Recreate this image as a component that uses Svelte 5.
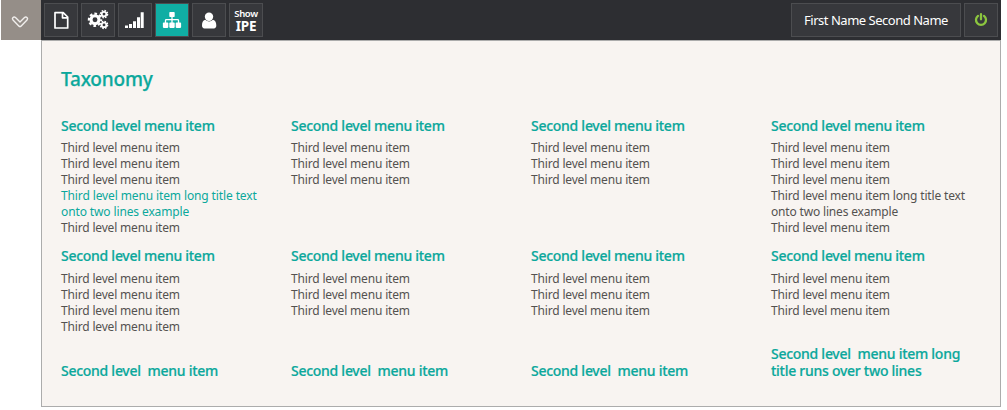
<script>
  const third = 'Third level menu item';
  const long = 'Third level menu item long title text onto two lines example';
  const second = 'Second level menu item';
  const spaced = 'Second level\u00a0 menu item';
  const rows = [
    [
      { title: second, items: [third, third, third, long, third], active: 3 },
      { title: second, items: [third, third, third] },
      { title: second, items: [third, third, third] },
      { title: second, items: [third, third, third, long, third] }
    ],
    [
      { title: second, items: [third, third, third, third] },
      { title: second, items: [third, third, third] },
      { title: second, items: [third, third, third] },
      { title: second, items: [third, third, third] }
    ],
    [
      { title: spaced, items: [] },
      { title: spaced, items: [] },
      { title: spaced, items: [] },
      { title: spaced + ' long title runs over two lines', items: [] }
    ]
  ];
</script>

<div class="page">
  <header class="bar">
    <button class="toggle" aria-label="Toggle menu">
      <svg width="40" height="40" viewBox="0 0 40 40" fill="none" stroke="#f1efed" stroke-width="1.4" stroke-linejoin="round">
        <path d="M12 17.5 Q10.8 18.9 12 20.1 L17.8 26 Q19 27.2 20.2 26 L26 20.1 Q27.2 18.9 26 17.5 Q24.8 16.4 23.5 17.5 L19 22 L14.5 17.5 Q13.2 16.4 12 17.5Z" />
      </svg>
    </button>
    <nav class="tools">
      <button class="tool" aria-label="Content">
        <svg width="32" height="32" viewBox="0 0 32 32" fill="none" stroke="#fff" stroke-width="1.7" stroke-linejoin="round">
          <path d="M10 8.7H18.2L22.7 13V24H10ZM17.5 9V13.8H22.5" />
        </svg>
      </button>
      <button class="tool" aria-label="Settings">
        <svg width="32" height="32" viewBox="0 0 32 32" fill="none" stroke="#fff">
          <circle cx="13" cy="15.7" r="4" stroke-width="3.1" />
          <circle cx="13" cy="15.7" r="6.1" stroke-width="2.2" stroke-dasharray="2.7 2.09" stroke-dashoffset="1.35" />
          <circle cx="22" cy="10.1" r="2.3" stroke-width="1.8" />
          <circle cx="22" cy="10.1" r="3.6" stroke-width="1.4" stroke-dasharray="1.6 1.227" />
          <circle cx="22" cy="20.9" r="2.3" stroke-width="1.8" />
          <circle cx="22" cy="20.9" r="3.6" stroke-width="1.4" stroke-dasharray="1.6 1.227" />
        </svg>
      </button>
      <button class="tool" aria-label="Reports">
        <svg width="32" height="32" viewBox="0 0 32 32" fill="#fff">
          <path d="M6 21.4h3V24H6ZM10 20h3V24h-3ZM14 17.3h3V24h-3ZM18 13.3h3V24h-3ZM21.7 8.3h3V24h-3Z" />
        </svg>
      </button>
      <button class="tool on" aria-label="Taxonomy">
        <svg width="32" height="32" viewBox="0 0 32 32" fill="#fff">
          <rect x="13.3" y="8" width="5.4" height="5" rx=".8" />
          <rect x="6.9" y="18.6" width="5.4" height="5.3" rx=".8" />
          <rect x="13.3" y="18.6" width="5.4" height="5.3" rx=".8" />
          <rect x="19.7" y="18.6" width="5.4" height="5.3" rx=".8" />
          <path d="M16 12v7M9.5 19v-2.5q0-.8.8-.8h11.4q.8 0 .8.8V19" fill="none" stroke="#fff" stroke-width="1.3" />
        </svg>
      </button>
      <button class="tool" aria-label="User">
        <svg width="32" height="32" viewBox="0 0 32 32" fill="#fff">
          <circle cx="16" cy="12.8" r="4.2" />
          <path d="M12.2 15.8C9.8 16.3 9 18.6 9 21.6Q9 24.4 11.5 24.4H20.8Q23.3 24.4 23.3 21.6C23.3 18.6 22.4 16.3 20 15.8Q16.1 19 12.2 15.8Z" />
        </svg>
      </button>
      <button class="tool ipe"><span>Show</span><b>IPE</b></button>
    </nav>
    <button class="tool name">First Name Second Name</button>
    <button class="tool" aria-label="Log out">
      <svg width="32" height="32" viewBox="0 0 32 32" fill="none" stroke="#8cc63f" stroke-width="2.3" stroke-linecap="round">
        <path d="M13 11.9A5 5 0 1 0 19 11.9M16 10.2V15.3" />
      </svg>
    </button>
  </header>

  <main class="panel">
    <h1>Taxonomy</h1>
    {#each rows as row, r}
      <div class="row row{r}">
        {#each row as group}
          <section>
            <h2>{group.title}</h2>
            {#if group.items.length}
              <ul>
                {#each group.items as item, i}
                  <li class:active={group.active === i}>{item}</li>
                {/each}
              </ul>
            {/if}
          </section>
        {/each}
      </div>
    {/each}
  </main>
</div>

<style>
  :global(body) { margin: 0; background: #fff; }
  .page {
    box-sizing: border-box;
    width: 1001px;
    padding-left: 1px;
    font-family: "Noto Sans", "Open Sans", sans-serif;
  }
  .bar {
    display: flex;
    align-items: center;
    gap: 3px;
    box-sizing: border-box;
    height: 40px;
    padding-right: 3px;
    background: #2d2e32;
  }
  button {
    box-sizing: border-box;
    padding: 0;
    border: 0;
    color: #fff;
    font-family: inherit;
  }
  svg { display: block; }
  .toggle { width: 40px; height: 40px; background: #958e88; }
  .tools { display: flex; gap: 3px; margin-right: auto; }
  .tool {
    width: 34px;
    height: 34px;
    border: 1px solid #4c4d50;
    background: #37383c;
  }
  .on { background: #10aea4; }
  .ipe {
    display: flex;
    flex-direction: column;
    align-items: center;
    justify-content: center;
  }
  .ipe span { font-size: 9.5px; line-height: 13px; font-weight: 600; letter-spacing: -0.35px; }
  .ipe b { font-size: 13.5px; line-height: 13px; letter-spacing: -0.2px; }
  .name { width: 170px; font-size: 13px; letter-spacing: -0.48px; white-space: nowrap; }
  .panel {
    box-sizing: border-box;
    height: 367px;
    margin-left: 40px;
    padding: 26px 0 0 19px;
    border: 1px solid #acacac;
    background: #f8f4f1;
  }
  h1, h2, ul { margin: 0; padding: 0; }
  h1 {
    height: 50px;
    font-size: 19px;
    line-height: 24px;
    font-weight: 500;
    letter-spacing: -0.2px;
    color: #0ba89c;
    -webkit-text-stroke: 0.25px currentColor;
  }
  .row { display: grid; grid-template-columns: 230px 240px 240px 230px; }
  .row0 { height: 130px; }
  .row1 { height: 98px; }
  .row2 { height: 34px; align-items: end; }
  h2 {
    width: 200px;
    font-size: 14px;
    line-height: 17px;
    font-weight: 500;
    letter-spacing: -0.27px;
    color: #0ba89c;
    -webkit-text-stroke: 0.2px currentColor;
  }
  ul { padding-top: 6px; list-style: none; }
  .row1 ul { padding-top: 7px; }
  li {
    width: 205px;
    font-size: 12px;
    line-height: 16px;
    letter-spacing: -0.17px;
    color: #545250;
  }
  .active { color: #0ba89c; letter-spacing: -0.12px; }
</style>
